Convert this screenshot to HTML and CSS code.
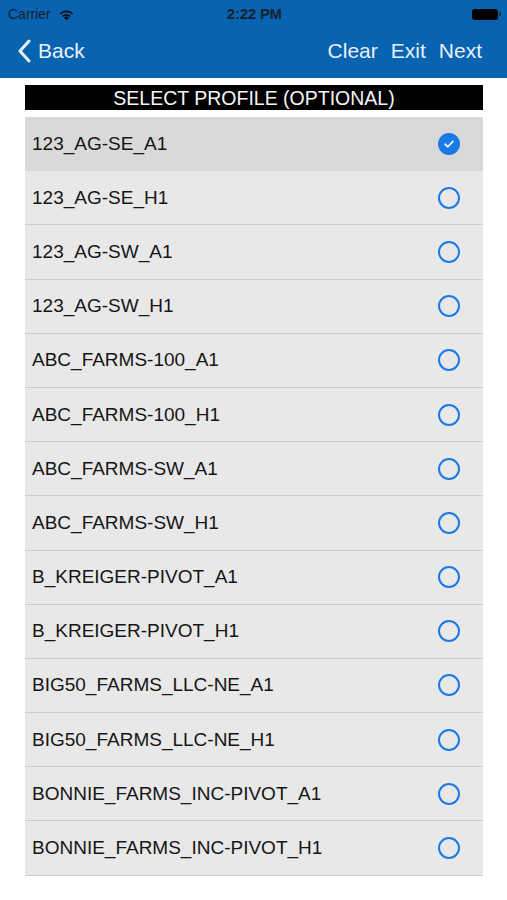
FILE: index.html
```html
<!DOCTYPE html>
<html lang="en">
<head>
    <meta charset="UTF-8">
    <meta name="viewport" content="width=device-width, initial-scale=1.0">
    <title>Select Profile</title>
    <link rel="stylesheet" href="styles.css">
</head>
<body>
    <div class="Top">
        <!-- Status bar -->
        <div class="status">
            <div class="carrier">
                Carrier
                <svg class="wifi" width="17" height="13" viewBox="0 0 16 12">
                    <path d="M8 11.5 L5.6 9 A3.4 3.4 0 0 1 10.4 9 Z" fill="#111"/>
                    <path d="M3.9 7.3 A5.8 5.8 0 0 1 12.1 7.3 L11 8.4 A4.3 4.3 0 0 0 5 8.4 Z" fill="#111"/>
                    <path d="M1.6 5 A9 9 0 0 1 14.4 5 L13.3 6.1 A7.5 7.5 0 0 0 2.7 6.1 Z" fill="#111"/>
                </svg>
            </div>
            <div class="time">2:22 PM</div>
            <div class="battery"><span class="battery-body"></span><span class="battery-nub"></span></div>
        </div>
        <!-- Nav bar -->
        <div class="nav">
            <div class="back">
                <svg width="14" height="24" viewBox="0 0 14 24">
                    <path d="M12 2 L3 12 L12 22" fill="none" stroke="#e9f0f8" stroke-width="3" stroke-linecap="round" stroke-linejoin="round"/>
                </svg>
                <span>Back</span>
            </div>
            <div class="actions">
                <span>Clear</span>
                <span>Exit</span>
                <span>Next</span>
            </div>
        </div>
    </div>

    <div class="Content">
        <div class="title">SELECT PROFILE (OPTIONAL)</div>
        <ul class="list">
            <li class="selected">123_AG-SE_A1<span class="radio"><svg width="12" height="10" viewBox="0 0 12 10"><path d="M2 5.2 L4.8 7.8 L10 2.4" fill="none" stroke="#fff" stroke-width="1.6" stroke-linecap="round" stroke-linejoin="round"/></svg></span></li>
            <li>123_AG-SE_H1<span class="radio"></span></li>
            <li>123_AG-SW_A1<span class="radio"></span></li>
            <li>123_AG-SW_H1<span class="radio"></span></li>
            <li>ABC_FARMS-100_A1<span class="radio"></span></li>
            <li>ABC_FARMS-100_H1<span class="radio"></span></li>
            <li>ABC_FARMS-SW_A1<span class="radio"></span></li>
            <li>ABC_FARMS-SW_H1<span class="radio"></span></li>
            <li>B_KREIGER-PIVOT_A1<span class="radio"></span></li>
            <li>B_KREIGER-PIVOT_H1<span class="radio"></span></li>
            <li>BIG50_FARMS_LLC-NE_A1<span class="radio"></span></li>
            <li>BIG50_FARMS_LLC-NE_H1<span class="radio"></span></li>
            <li>BONNIE_FARMS_INC-PIVOT_A1<span class="radio"></span></li>
            <li>BONNIE_FARMS_INC-PIVOT_H1<span class="radio"></span></li>
        </ul>
    </div>
</body>
</html>
```

FILE: styles.css
```css
* {
    margin: 0;
    padding: 0;
    box-sizing: border-box;
}
body {
    font-family: "Liberation Sans", Arial, sans-serif;
    background-color: #ffffff;
    overflow: hidden;
}

/* Blue header with status bar and nav */
.Top {
    background-color: #0863b0;
    height: 78px;
}
.status {
    height: 28px;
    display: flex;
    align-items: center;
    justify-content: space-between;
    padding: 0 6px 0 8px;
    font-size: 14px;
    color: #14212e;
}
.carrier {
    display: flex;
    align-items: center;
    gap: 7px;
    width: 120px;
}
.time {
    font-weight: bold;
    font-size: 14.5px;
}
.battery {
    width: 120px;
    display: flex;
    justify-content: flex-end;
    align-items: center;
}
.battery-body {
    width: 26px;
    height: 11px;
    background-color: #000;
    border-radius: 3px;
}
.battery-nub {
    width: 2px;
    height: 4px;
    margin-left: 1px;
    background-color: #1b3350;
}

.nav {
    height: 50px;
    display: flex;
    align-items: center;
    justify-content: space-between;
    padding: 0 25px 4px 17px;
    color: #e9f0f8;
    font-size: 21px;
}
.back {
    display: flex;
    align-items: center;
    gap: 7px;
}
.actions {
    display: flex;
    gap: 13px;
}

/* Content */
.Content {
    padding: 7px 24px 0 25px;
}
.title {
    background-color: #000;
    color: #f4f4f4;
    text-align: center;
    font-size: 19.5px;
    height: 25px;
    line-height: 26px;
}
.list {
    list-style: none;
    margin-top: 7px;
}
.list li {
    height: 54.2px;
    background-color: #e8e8e8;
    border-bottom: 1.5px solid #cbcbcb;
    display: flex;
    align-items: center;
    justify-content: space-between;
    padding: 0 23px 0 7px;
    font-size: 19px;
    color: #151515;
}
.list li.selected {
    background-color: #d9d9d9;
    border-bottom: none;
}
.radio {
    width: 22px;
    height: 22px;
    border: 2px solid #1a7ae6;
    border-radius: 50%;
    display: flex;
    align-items: center;
    justify-content: center;
}
.selected .radio {
    background-color: #1a7ae6;
}
```
